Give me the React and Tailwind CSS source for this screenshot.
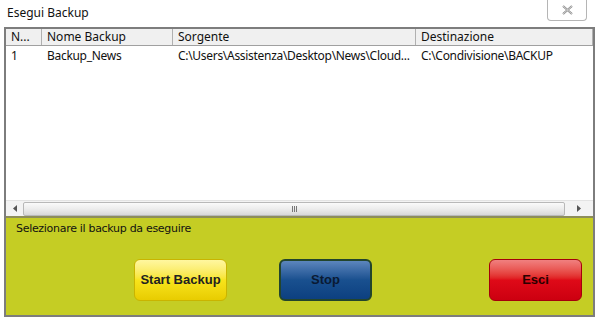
export default function App() {
  const cols = [
    { name: 'N...', w: 'w-[36px]' },
    { name: 'Nome Backup', w: 'w-[131px]' },
    { name: 'Sorgente', w: 'w-[243px]' },
    { name: 'Destinazione', w: 'flex-1' },
  ];
  const row = ['1', 'Backup_News', 'C:\\Users\\Assistenza\\Desktop\\News\\Cloud...', 'C:\\Condivisione\\BACKUP'];

  return (
    <div className="w-[601px] h-[321px] bg-white relative overflow-hidden" style={{ fontFamily: 'Tahoma, "DejaVu Sans", "Liberation Sans", sans-serif' }}>
      <div className="h-[27px] flex items-start justify-between pl-[7px] pr-[14px]">
        <span className="text-[12px] text-[#111] mt-[4px]" style={{ fontFamily: '"Noto Sans", "Open Sans", sans-serif' }}>Esegui Backup</span>
        <div className="w-[40px] h-[21px] border border-t-0 border-[#b5b5b5] rounded-b-[4px] bg-white flex items-center justify-center">
          <svg width="11" height="10" viewBox="0 0 11 10">
            <path d="M1 1 L10 9 M10 1 L1 9" stroke="#8a8a8a" strokeWidth="2" fill="none" />
            <path d="M1 1 L10 9 M10 1 L1 9" stroke="#fff" strokeWidth="0.6" fill="none" />
          </svg>
        </div>
      </div>

      <div className="mx-[4px] w-[591px] h-[290px] border-2 border-t-0 border-[#7d7d7d] flex flex-col">
        <div className="h-[189px] border-t-2 border-[#7d7d7d] bg-white flex flex-col" style={{ fontFamily: '"Noto Sans", "Open Sans", sans-serif' }}>
          <div className="flex h-[17px] bg-[#f0f0f0] border-b border-[#a0a0a0]">
            {cols.map((c, i) => (
              <div key={i} className={`${c.w} shrink-0 border-r border-[#b0b0b0] pl-[5px] text-[12px] leading-[16px] text-[#111] truncate`}>
                {c.name}
              </div>
            ))}
          </div>
          <div className="flex h-[17px] mt-[1px]">
            {row.map((t, i) => (
              <div key={i} className={`${cols[i].w} shrink-0 pl-[5px] text-[12px] leading-[17px] tracking-[-0.3px] text-[#111] whitespace-nowrap`}>
                {t}
              </div>
            ))}
          </div>
          <div className="flex-1" />
          <div className="h-[16px] flex items-center bg-[#f3f3f3] border-t border-[#e3e3e3]">
            <div className="w-[17px] h-full flex items-center justify-center">
              <svg width="4" height="7" viewBox="0 0 4 7"><path d="M4 0 L0 3.5 L4 7 Z" fill="#555" /></svg>
            </div>
            <div className="flex-1 h-[14px] rounded-[2px] border border-[#b8b8b8] bg-gradient-to-b from-[#fafafa] via-[#ececec] to-[#d8d8d8] flex items-center justify-center">
              <div className="flex gap-[1px]">
                <div className="w-[1px] h-[6px] bg-[#777]" />
                <div className="w-[1px] h-[6px] bg-[#777]" />
                <div className="w-[1px] h-[6px] bg-[#777]" />
              </div>
            </div>
            <div className="w-[28px] h-full flex items-center justify-center">
              <svg width="4" height="7" viewBox="0 0 4 7"><path d="M0 0 L4 3.5 L0 7 Z" fill="#555" /></svg>
            </div>
          </div>
        </div>

        <div className="flex-1 bg-[#c5cd24] border-t-2 border-[#8d8d5a] flex flex-col">
          <div className="text-[11px] text-[#111] pl-[10px] mt-[3px]" style={{ fontFamily: '"DejaVu Sans", sans-serif', letterSpacing: '-0.3px' }}>
            Selezionare il backup da eseguire
          </div>
          <div className="flex items-center mt-[21px] pl-[128px]">
            <button className="w-[93px] h-[42px] rounded-[6px] border border-[#c9b400] bg-gradient-to-b from-[#fff7a0] via-[#f8e41a] to-[#e8cc00] text-[13px] font-bold text-[#222]" style={{ fontFamily: '"Liberation Sans", Arial, sans-serif' }}>
              Start Backup
            </button>
            <button className="ml-[52px] w-[93px] h-[42px] rounded-[6px] border-2 border-[#23452c] bg-gradient-to-b from-[#5c86bd] via-[#19508f] to-[#0d4080] text-[13px] font-bold text-[#0a1a33]" style={{ fontFamily: '"Liberation Sans", Arial, sans-serif' }}>
              Stop
            </button>
            <button className="ml-[117px] w-[93px] h-[42px] rounded-[6px] border border-[#a5000a] bg-gradient-to-b from-[#f08080] via-[#df0a18] to-[#cc0010] text-[13px] font-bold text-[#2a0000]" style={{ fontFamily: '"Liberation Sans", Arial, sans-serif' }}>
              Esci
            </button>
          </div>
        </div>
      </div>
    </div>
  );
}
